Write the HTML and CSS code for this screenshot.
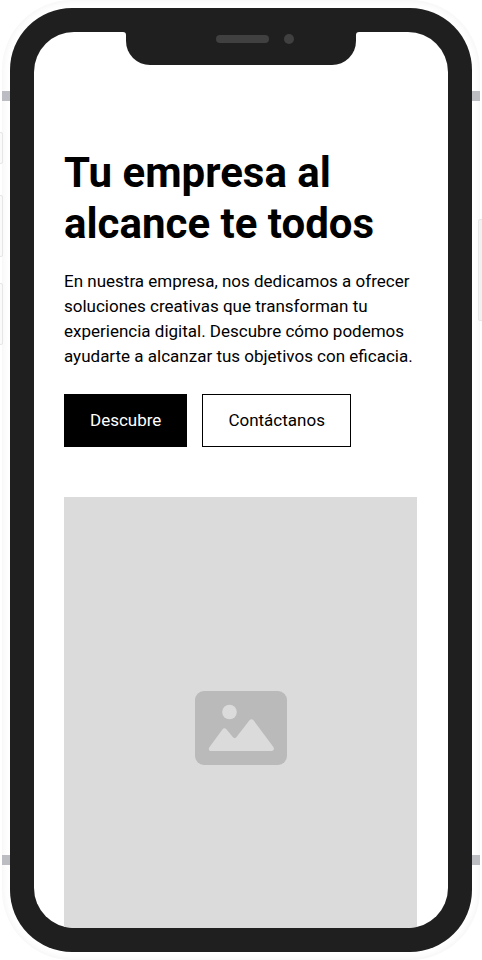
FILE: index.html
```html
<!DOCTYPE html>
<html lang="es">
<head>
<meta charset="utf-8">
<meta name="viewport" content="width=device-width, initial-scale=1">
<title>Tu empresa al alcance te todos</title>
<link rel="stylesheet" href="styles.css">
</head>
<body>
<div class="phone">
  <span class="key key-mute"></span>
  <span class="key key-up"></span>
  <span class="key key-down"></span>
  <span class="key key-power"></span>
  <div class="shell">
    <span class="band band-top"></span>
    <span class="band band-bottom"></span>
    <div class="bezel">
      <div class="notch">
        <svg class="ear" viewBox="0 0 3 3" aria-hidden="true"><path d="M0 0H3V3A3 3 0 0 0 0 0Z"/></svg>
        <span class="speaker"></span>
        <span class="camera"></span>
        <svg class="ear ear-right" viewBox="0 0 3 3" aria-hidden="true"><path d="M3 0H0V3A3 3 0 0 1 3 0Z"/></svg>
      </div>
      <main class="screen">
        <h1 class="title">Tu empresa al alcance te todos</h1>
        <p class="lead">En nuestra empresa, nos dedicamos a ofrecer soluciones creativas que transforman tu experiencia digital. Descubre cómo podemos ayudarte a alcanzar tus objetivos con eficacia.</p>
        <div class="actions">
          <button class="button button-primary" type="button">Descubre</button>
          <button class="button" type="button">Contáctanos</button>
        </div>
        <div class="picture">
          <svg class="picture-icon" viewBox="0 0 94 76" aria-hidden="true">
            <rect x="1" y="1" width="92" height="74" rx="9" fill="#bababa"/>
            <circle cx="35.5" cy="22" r="7.3" fill="#dbdbdb"/>
            <path d="M17 61C14.800 61 14.200 58.800 15.400 57.200L28.400 39.400C29.600 37.800 31.200 37.800 32.400 39.300L38.800 47C40 48.500 41.300 48.500 42.500 47L55.300 30.500C56.600 28.800 58.400 28.800 59.700 30.500L79.200 56.800C80.700 58.900 79.700 61 77.500 61Z" fill="#dbdbdb"/>
          </svg>
        </div>
      </main>
    </div>
  </div>
</div>
</body>
</html>
```
FILE: styles.css
```css
* {
  box-sizing: border-box;
}

body {
  margin: 0;
  background: #fff;
  color: #000;
  font-family: Roboto, "Liberation Sans", sans-serif;
}

.phone {
  position: relative;
  height: 100vh;
  padding: 0 2px;
  overflow: hidden;
}

.shell {
  position: relative;
  height: 100%;
  padding: 8px;
  border-radius: 70px;
  background: #fff;
  box-shadow: inset 0 0 8px #f0f0f0;
}

/* Antenna bands across the metal edge */
.band {
  position: absolute;
  left: 0;
  right: 0;
  height: 10px;
  background: #bcbcc3;
}

.band-top {
  top: 91px;
}

.band-bottom {
  bottom: 95px;
}

/* Side keys */
.key {
  position: absolute;
  z-index: 1;
  left: -3px;
  width: 6px;
  height: 62px;
  border: 1px solid #e6e6e6;
  border-radius: 2px;
  background: #fafafa;
}

.key-mute {
  top: 132px;
  height: 32px;
}

.key-up {
  top: 195px;
}

.key-down {
  top: 283px;
}

.key-power {
  top: 219px;
  left: auto;
  right: -2px;
  height: 102px;
  background: #f1f1f1;
}

.bezel {
  position: relative;
  height: 100%;
  padding: 24px;
  border-radius: 62px;
  background: #1f1f1f;
}

.notch {
  position: absolute;
  z-index: 1;
  top: 24px;
  left: 50%;
  width: 230px;
  height: 33px;
  margin-left: -115px;
  border-radius: 0 0 24px 24px;
  background: #1f1f1f;
}

.ear {
  position: absolute;
  top: 0;
  left: -3px;
  width: 3px;
  height: 3px;
  fill: #1f1f1f;
}

.ear-right {
  left: 100%;
}

.speaker {
  position: absolute;
  top: 3px;
  left: 90px;
  width: 53px;
  height: 8px;
  border-radius: 4px;
  background: #404040;
}

.camera {
  position: absolute;
  top: 2px;
  left: 158px;
  width: 10px;
  height: 10px;
  border-radius: 50%;
  background: #404040;
}

.screen {
  height: 100%;
  padding: 115px 31px 0 30px;
  border-radius: 40px;
  background: #fff;
  overflow: hidden;
}

.title {
  margin: 0 0 20px;
  font-size: 42px;
  line-height: 51px;
  font-weight: 700;
}

.lead {
  margin: 0 0 25px;
  font-size: 17px;
  line-height: 25px;
}

.actions {
  display: flex;
  gap: 15px;
  margin: 0 0 50px;
}

.button {
  height: 53px;
  padding: 0 25px 2px;
  border: 1px solid #000;
  border-radius: 0;
  background: #fff;
  color: #000;
  font: inherit;
  font-size: 17px;
}

.button-primary {
  background: #000;
  color: #fff;
}

.picture {
  display: flex;
  align-items: center;
  justify-content: center;
  aspect-ratio: 353 / 462;
  background: #dbdbdb;
}

.picture-icon {
  width: 94px;
  height: 76px;
}
```
